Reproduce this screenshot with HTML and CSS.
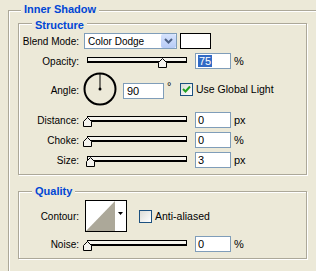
FILE: index.html
```html
<!DOCTYPE html>
<html lang="en">
<head>
    <meta charset="UTF-8">
    <title>Inner Shadow</title>
    <link rel="stylesheet" href="styles.css">
</head>
<body>
    <div class="group outer">
        <div class="group-title">Inner Shadow</div>

        <div class="group structure">
            <div class="group-title">Structure</div>

            <div class="row row-blend">
                <span class="label">Blend Mode:</span>
                <div class="select">
                    <span class="select-text">Color Dodge</span>
                    <span class="select-btn">
                        <svg width="15" height="14" viewBox="0 0 15 14"><path d="M4 5 L7.5 8.5 L11 5" fill="none" stroke="#4d6185" stroke-width="2"/></svg>
                    </span>
                </div>
                <div class="swatch"></div>
            </div>

            <div class="row">
                <span class="label">Opacity:</span>
                <div class="slider">
                    <div class="track"></div>
                    <svg class="thumb" style="left:75px" width="9" height="10" viewBox="0 0 9 10"><polygon points="4.5,0.5 8.5,4.5 8.5,9.5 0.5,9.5 0.5,4.5" fill="#f4f3ee" stroke="#000"/></svg>
                </div>
                <div class="field"><span class="sel">75</span></div>
                <span class="unit">%</span>
            </div>

            <div class="row row-angle">
                <span class="label">Angle:</span>
                <svg class="dial" width="34" height="34" viewBox="0 0 34 34">
                    <circle cx="17" cy="17" r="15.5" fill="none" stroke="#000" stroke-width="2"/>
                    <line x1="17" y1="17" x2="17" y2="2" stroke="#000" stroke-width="1"/>
                    <circle cx="17" cy="17" r="1.5" fill="#000"/>
                </svg>
                <div class="field field-angle">90</div>
                <span class="deg">°</span>
                <span class="check">
                    <svg width="11" height="11" viewBox="0 0 11 11"><path d="M2 5 L4.5 7.5 L9 2.5" fill="none" stroke="#21a121" stroke-width="2"/></svg>
                </span>
                <span class="check-label">Use Global Light</span>
            </div>

            <div class="row row-distance">
                <span class="label">Distance:</span>
                <div class="slider">
                    <div class="track"></div>
                    <svg class="thumb" style="left:0px" width="9" height="10" viewBox="0 0 9 10"><polygon points="4.5,0.5 8.5,4.5 8.5,9.5 0.5,9.5 0.5,4.5" fill="#f4f3ee" stroke="#000"/></svg>
                </div>
                <div class="field">0</div>
                <span class="unit">px</span>
            </div>

            <div class="row">
                <span class="label">Choke:</span>
                <div class="slider">
                    <div class="track"></div>
                    <svg class="thumb" style="left:0px" width="9" height="10" viewBox="0 0 9 10"><polygon points="4.5,0.5 8.5,4.5 8.5,9.5 0.5,9.5 0.5,4.5" fill="#f4f3ee" stroke="#000"/></svg>
                </div>
                <div class="field">0</div>
                <span class="unit">%</span>
            </div>

            <div class="row">
                <span class="label">Size:</span>
                <div class="slider">
                    <div class="track"></div>
                    <svg class="thumb" style="left:3px" width="9" height="10" viewBox="0 0 9 10"><polygon points="4.5,0.5 8.5,4.5 8.5,9.5 0.5,9.5 0.5,4.5" fill="#f4f3ee" stroke="#000"/></svg>
                </div>
                <div class="field">3</div>
                <span class="unit">px</span>
            </div>
        </div>

        <div class="group quality">
            <div class="group-title">Quality</div>

            <div class="row row-contour">
                <span class="label">Contour:</span>
                <svg class="contour" width="42" height="32" viewBox="0 0 42 32">
                    <rect x="0.5" y="0.5" width="41" height="31" fill="#fff" stroke="#000"/>
                    <polygon points="1,31 30,1 30,31" fill="#aca899"/>
                    <polygon points="33,12 38,12 35.5,15" fill="#000"/>
                </svg>
                <span class="check check-empty"></span>
                <span class="check-label">Anti-aliased</span>
            </div>

            <div class="row">
                <span class="label">Noise:</span>
                <div class="slider">
                    <div class="track"></div>
                    <svg class="thumb" style="left:0px" width="9" height="10" viewBox="0 0 9 10"><polygon points="4.5,0.5 8.5,4.5 8.5,9.5 0.5,9.5 0.5,4.5" fill="#f4f3ee" stroke="#000"/></svg>
                </div>
                <div class="field">0</div>
                <span class="unit">%</span>
            </div>
        </div>
    </div>
</body>
</html>
```

FILE: styles.css
```css
body {
    margin: 0;
    width: 316px;
    height: 271px;
    overflow: hidden;
    background-color: #ece9d8;
    color: #000;
    font-family: 'Liberation Sans', Arial, sans-serif;
    font-size: 10px;
}
.group {
    box-sizing: border-box;
    border: 1px solid #aca899;
    box-shadow: inset 1px 1px 0 #fff, 1px 1px 0 #fff;
}
.outer {
    margin: 10px 0 0 8px;
    width: 309px;
    height: 262px;
    padding-left: 9px;
    box-shadow: inset 1px 1px 0 #fff;
}
.group-title {
    display: block;
    width: max-content;
    padding: 0 3px;
    background-color: #ece9d8;
    color: #0046d5;
    font-size: 11px;
    font-weight: bold;
    line-height: 13px;
}
.outer > .group-title {
    margin: -8px 0 0 3px;
}
.structure {
    margin-top: 7px;
    width: 289px;
    padding-bottom: 6px;
}
.structure > .group-title,
.quality > .group-title {
    margin: -5px 0 0 13px;
}
.quality {
    margin-top: 16px;
    width: 289px;
    padding-bottom: 6px;
}
.quality > .group-title {
    margin-top: -7px;
}
.row {
    display: flex;
    align-items: center;
    height: 16px;
    margin-top: 4px;
}
.row-blend {
    margin-top: 1px;
}
.row-angle {
    height: 34px;
    margin-top: 3px;
    align-items: flex-start;
}
.row-distance {
    margin-top: 6px;
}
.row-contour {
    height: 32px;
    margin-top: 2px;
}
.label {
    flex: none;
    width: 60px;
    text-align: right;
    line-height: 13px;
}
.row-angle .label {
    margin-top: 12px;
}
.select {
    box-sizing: border-box;
    display: flex;
    align-items: center;
    justify-content: space-between;
    margin-left: 5px;
    width: 93px;
    height: 16px;
    border: 1px solid #7f9db9;
    background-color: #fff;
}
.select-text {
    padding-left: 3px;
}
.select-btn {
    display: block;
    width: 15px;
    height: 14px;
    border-radius: 2px;
    background: linear-gradient(#d6e3fd, #b7cbf6);
}
.select-btn svg {
    display: block;
}
.swatch {
    box-sizing: border-box;
    margin-left: 3px;
    width: 31px;
    height: 16px;
    border: 1px solid #000;
    background-color: #fff;
}
.slider {
    position: relative;
    flex: none;
    margin-left: 4px;
    width: 104px;
    height: 16px;
}
.track {
    box-sizing: border-box;
    margin: 4px 0 0 4px;
    width: 100px;
    height: 6px;
    border: 1px solid #000;
    border-bottom-width: 2px;
    background-color: #f6f5ee;
}
.thumb {
    position: absolute;
    top: 5px;
    display: block;
}
.field {
    box-sizing: border-box;
    flex: none;
    margin-left: 8px;
    width: 36px;
    height: 16px;
    padding: 1px 0 0 2px;
    border: 1px solid #7f9db9;
    background-color: #fff;
    font-size: 11px;
    line-height: 12px;
}
.sel {
    display: inline-block;
    padding: 0 1px;
    background-color: #316ac5;
    color: #fff;
}
.unit {
    margin-left: 3px;
    font-size: 11px;
}
.dial {
    flex: none;
    margin-left: 4px;
}
.field-angle {
    margin: 11px 0 0 6px;
    width: 41px;
    padding-left: 3px;
}
.deg {
    width: 13px;
    margin-top: 8px;
    padding-left: 3px;
    font-size: 11px;
}
.check {
    box-sizing: border-box;
    display: flex;
    align-items: center;
    justify-content: center;
    flex: none;
    width: 13px;
    height: 13px;
    border: 1px solid #1c5180;
    background: linear-gradient(135deg, #dcdcd7, #fff);
}
.row-angle .check,
.row-angle .check-label {
    margin-top: 11px;
}
.check-label {
    margin-left: 3px;
    font-size: 10.5px;
    line-height: 13px;
}
.contour {
    flex: none;
    margin-left: 6px;
}
.row-contour .check {
    margin-left: 12px;
}
```
